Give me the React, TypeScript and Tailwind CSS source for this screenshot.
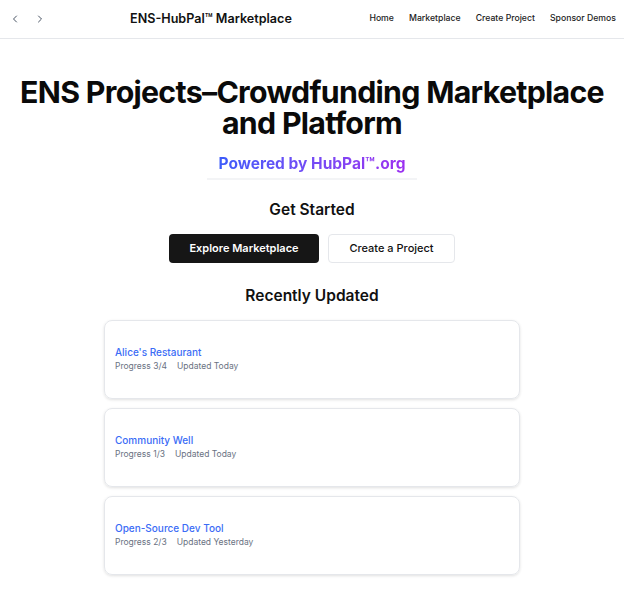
import { ChevronLeft, ChevronRight } from "lucide-react";

const projects = [
  { name: "Alice's Restaurant", progress: "3/4", updated: "Today" },
  { name: "Community Well", progress: "1/3", updated: "Today" },
  { name: "Open-Source Dev Tool", progress: "2/3", updated: "Yesterday" },
];

const NavBar = () => {
  return (
    <div className="h-[39px] border-b border-gray-200 flex items-center pl-[9px] pr-[8px]">
      <div className="flex items-center gap-[13px] text-gray-600">
        <ChevronLeft size={12} strokeWidth={2} />
        <ChevronRight size={12} strokeWidth={2} />
      </div>
      <div className="ml-[84px] text-[12.6px] font-semibold text-[#111]">
        ENS-HubPal™ Marketplace
      </div>
      <div className="ml-auto flex gap-[15px] text-[8.7px] font-medium text-[#222]">
        <span>Home</span>
        <span>Marketplace</span>
        <span>Create Project</span>
        <span>Sponsor Demos</span>
      </div>
    </div>
  );
};

const ProjectCard = ({ name, progress, updated }) => {
  return (
    <div className="h-[79px] rounded-[8px] border border-gray-200 shadow-[0_1px_3px_rgba(0,0,0,0.12)] px-[10px] flex flex-col justify-center">
      <div className="text-[10px] font-medium text-[#3b6cf6] leading-[14px]">{name}</div>
      <div className="text-[8.5px] text-gray-500 leading-[14px] flex gap-[10px]">
        <span>Progress {progress}</span>
        <span>Updated {updated}</span>
      </div>
    </div>
  );
};

export default function App() {
  return (
    <div className="w-[624px] h-[598px] bg-white font-['Inter',sans-serif] overflow-hidden">
      <NavBar />
      <div className="flex flex-col items-center">
        <h1 className="mt-[38px] text-center text-[30.3px] font-bold leading-[31px] tracking-[-0.7px] text-[#0a0a0a]">
          ENS Projects–Crowdfunding Marketplace
          <br />
          and Platform
        </h1>
        <div className="mt-[12px] pb-[3px] px-[12px] border-b-2 border-gray-100">
          <span className="text-[15.5px] font-bold bg-gradient-to-r from-[#3b5bfa] to-[#9b2ff0] bg-clip-text text-transparent">
            Powered by HubPal™.org
          </span>
        </div>
        <h2 className="mt-[18px] text-[15.5px] font-semibold text-[#111]">Get Started</h2>
        <div className="mt-[12px] flex gap-[9px]">
          <button className="w-[150px] h-[29px] rounded-[4px] bg-[#161616] text-white text-[11px] font-semibold">
            Explore Marketplace
          </button>
          <button className="w-[127px] h-[29px] rounded-[4px] border border-gray-200 bg-white text-[#111] text-[11px] font-medium">
            Create a Project
          </button>
        </div>
        <h2 className="mt-[21px] text-[15.5px] font-semibold text-[#111]">Recently Updated</h2>
        <div className="mt-[13px] w-[416px] flex flex-col gap-[9px]">
          {projects.map((p) => (
            <ProjectCard key={p.name} {...p} />
          ))}
        </div>
      </div>
    </div>
  );
}
